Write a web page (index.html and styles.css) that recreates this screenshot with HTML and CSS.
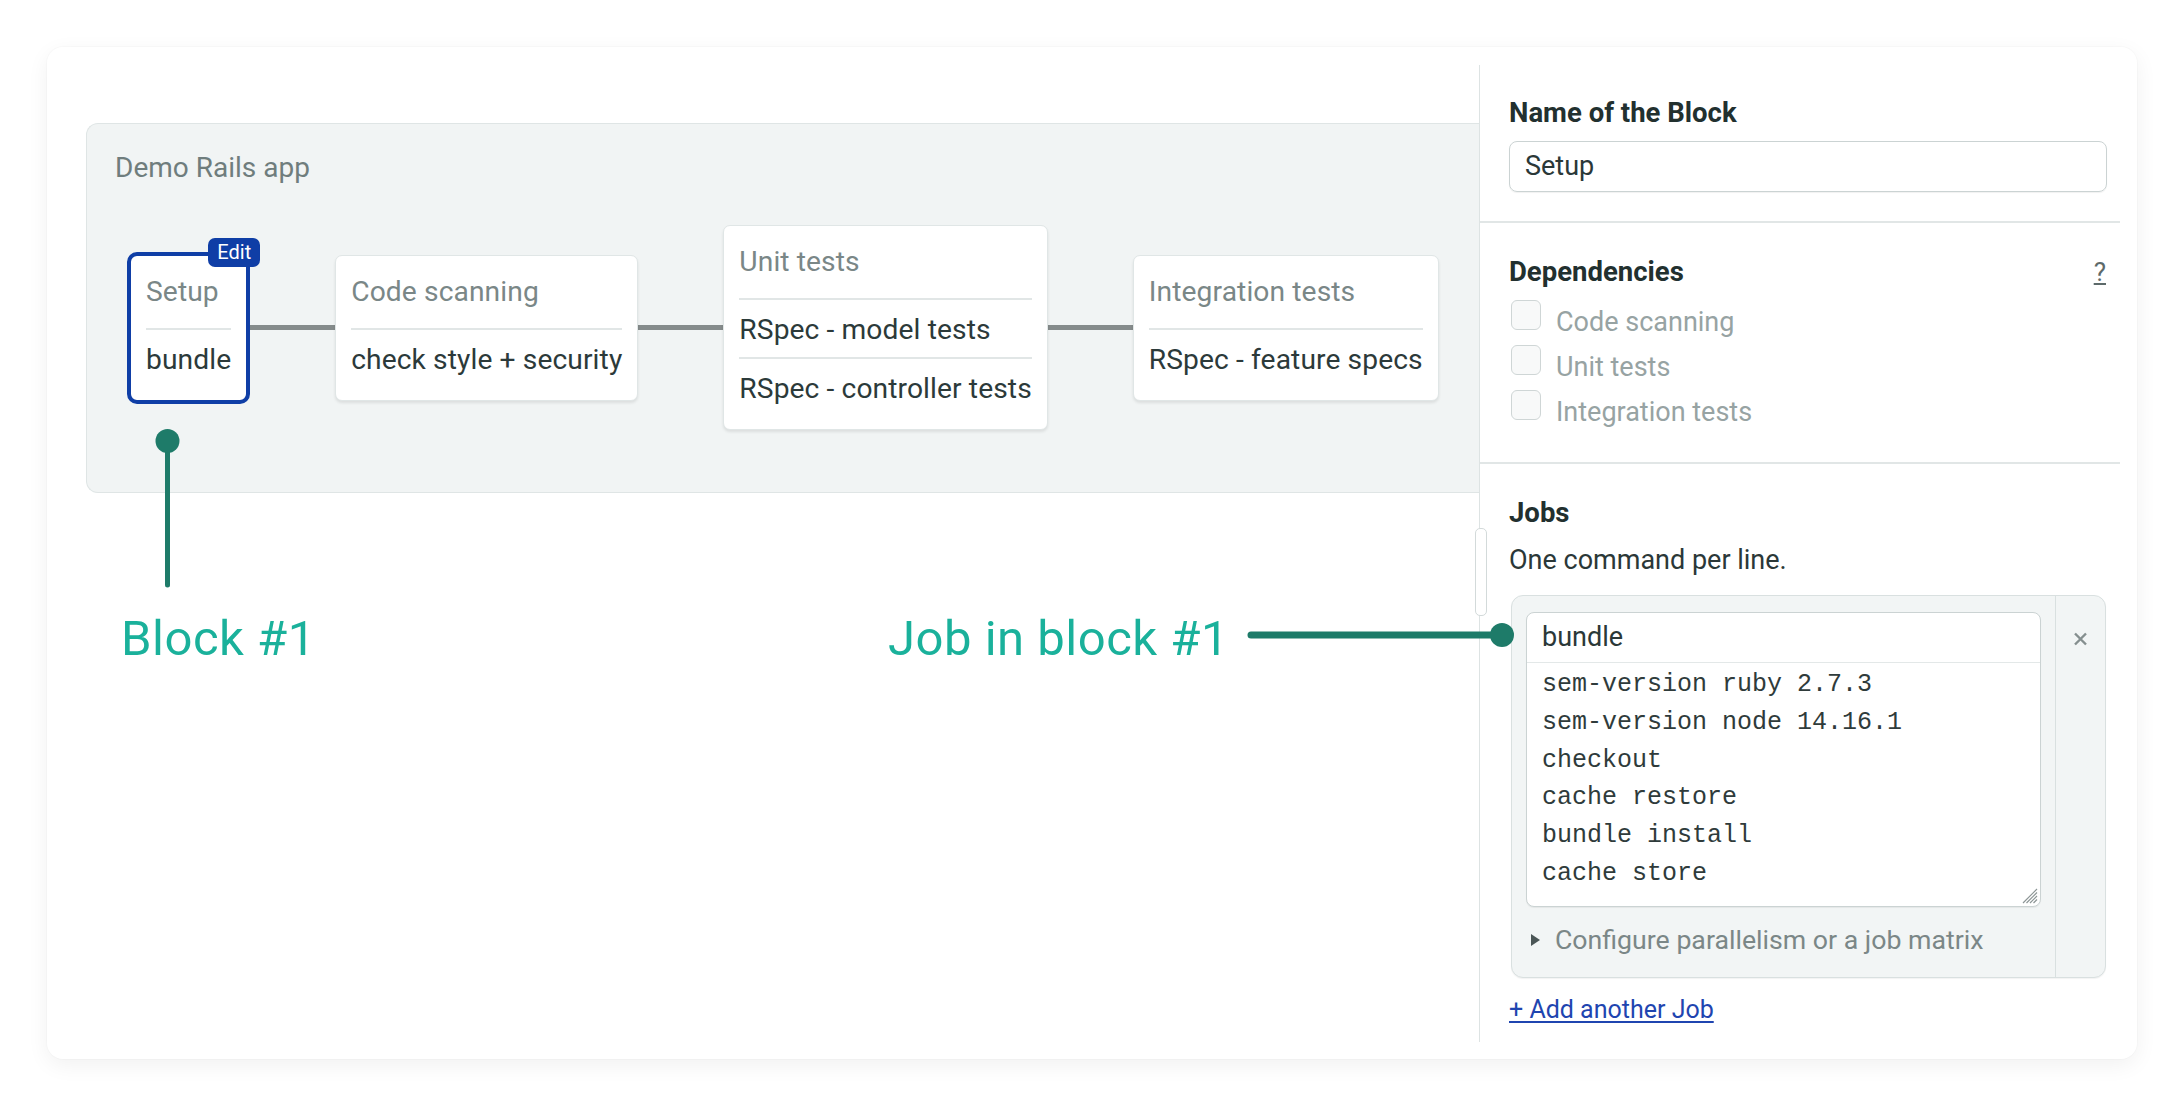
FILE: index.html
```html
<!DOCTYPE html>
<html>
<head>
<meta charset="utf-8">
<link rel="stylesheet" href="styles.css">
</head>
<body>
<div class="card">
  <div class="canvas">
    <div class="pipeline">
      <div class="pipeline-title">Demo Rails app</div>
      <div class="blocks">
        <div class="block selected">
          <span class="badge">Edit</span>
          <div class="block-title">Setup</div>
          <div class="job">bundle</div>
        </div>
        <div class="connector"></div>
        <div class="block">
          <div class="block-title">Code scanning</div>
          <div class="job">check style + security</div>
        </div>
        <div class="connector"></div>
        <div class="block">
          <div class="block-title">Unit tests</div>
          <div class="job">RSpec - model tests</div>
          <div class="job">RSpec - controller tests</div>
        </div>
        <div class="connector"></div>
        <div class="block">
          <div class="block-title">Integration tests</div>
          <div class="job">RSpec - feature specs</div>
        </div>
      </div>
    </div>
  </div>

  <div class="panel">
    <section class="sec sec-name">
      <div class="label">Name of the Block</div>
      <div class="input">Setup</div>
    </section>
    <section class="sec sec-deps">
      <div class="label-row">
        <div class="label">Dependencies</div>
        <span class="help">?</span>
      </div>
      <div class="check"><span class="box"></span><span class="check-label">Code scanning</span></div>
      <div class="check"><span class="box"></span><span class="check-label">Unit tests</span></div>
      <div class="check"><span class="box"></span><span class="check-label">Integration tests</span></div>
    </section>
    <section class="sec sec-jobs">
      <div class="label">Jobs</div>
      <div class="hint">One command per line.</div>
      <div class="jobbox">
        <div class="job-main">
          <div class="editor">
            <div class="job-name">bundle</div>
            <div class="cmds">
              <div>sem-version ruby 2.7.3</div>
              <div>sem-version node 14.16.1</div>
              <div>checkout</div>
              <div>cache restore</div>
              <div>bundle install</div>
              <div>cache store</div>
              <svg class="grip" width="16" height="16" viewBox="0 0 16 16"><path d="M15 1 L1 15 M15 4.5 L4.5 15 M15 8 L8 15 M15 11.5 L11.5 15" stroke="#8d9696" stroke-width="1.2" fill="none"/></svg>
            </div>
          </div>
          <div class="config"><span class="tri"></span>Configure parallelism or a job matrix</div>
        </div>
        <div class="job-side">
          <svg width="15" height="14" viewBox="0 0 15 14"><path d="M2 1.5 L13 12.5 M13 1.5 L2 12.5" stroke="#858f8f" stroke-width="2.4" fill="none"/></svg>
        </div>
      </div>
      <a class="add" href="#">+ Add another Job</a>
    </section>
  </div>

  <div class="thumb"></div>
  <svg class="annot" width="2090" height="1012" viewBox="0 0 2090 1012">
    <line x1="120.5" y1="394" x2="120.5" y2="538" stroke="#1e7b69" stroke-width="5" stroke-linecap="round"/>
    <circle cx="120.5" cy="394" r="12" fill="#1e7b69"/>
    <line x1="1204" y1="588" x2="1455" y2="588" stroke="#1e7b69" stroke-width="7" stroke-linecap="round"/>
    <circle cx="1455" cy="588" r="12" fill="#1e7b69"/>
  </svg>
  <div class="note note-block">Block #1</div>
  <div class="note note-job">Job in block #1</div>
</div>
</body>
</html>
```

FILE: styles.css
```css
* { box-sizing: border-box; }
html, body { margin: 0; padding: 0; background: #ffffff; }
body {
  font-family: Roboto, "Liberation Sans", Arial, sans-serif;
  color: #2b3838;
  width: 2184px;
  height: 1108px;
  overflow: hidden;
}

.card {
  position: relative;
  margin: 47px 0 0 47px;
  width: 2090px;
  height: 1012px;
  background: #ffffff;
  border-radius: 16px;
  box-shadow: 0 6px 22px rgba(0, 0, 0, 0.06), 0 0 0 1px rgba(0, 0, 0, 0.015);
  display: flex;
  padding: 18px 17px 17px 0;
}

.canvas {
  flex: 1;
  padding: 58px 0 0 39px;
}

.pipeline {
  background: #f1f4f4;
  border: 1px solid #dfe5e5;
  border-right: none;
  border-radius: 12px 0 0 12px;
  padding: 26px 0 0 28px;
  height: 370px;
}

.pipeline-title {
  font-size: 28px;
  line-height: 36px;
  color: #6f7d7d;
}

.blocks {
  display: flex;
  align-items: center;
  height: 205px;
  margin: 39px 0 0 12px;
}

.connector {
  width: 85px;
  height: 5px;
  background: #858b8b;
  flex: none;
}

.block {
  position: relative;
  flex: none;
  background: #ffffff;
  border: 1px solid #e0e6e6;
  border-radius: 7px;
  box-shadow: 0 2px 3px rgba(0, 0, 0, 0.09);
  padding: 0 15px 13px;
  font-size: 28.2px;
  letter-spacing: 0.1px;
}

.block.selected {
  border: 4px solid #0f3ea6;
  border-radius: 10px;
  box-shadow: none;
}

.badge {
  position: absolute;
  top: -18px;
  right: -14px;
  height: 29px;
  padding: 0 9px;
  background: #0f3ea6;
  color: #ffffff;
  border-radius: 7px;
  font-size: 20px;
  line-height: 29px;
  letter-spacing: 0;
}

.block-title {
  padding: 17px 0 17px;
  line-height: 38px;
  color: #7a8787;
  white-space: nowrap;
}

.job {
  border-top: 2px solid #e1e6e6;
  padding: 11px 0 9px;
  line-height: 37px;
  color: #2c3a3a;
  white-space: nowrap;
}

/* Right panel */
.panel {
  width: 641px;
  flex: none;
  border-left: 1px solid #dde3e3;
  display: flex;
  flex-direction: column;
}

.sec {
  padding: 0 13px 0 29px;
  border-bottom: 2px solid #e1e6e6;
}

.sec-jobs { border-bottom: none; }

.label {
  font-size: 27.5px;
  line-height: 36px;
  font-weight: 700;
  color: #22302f;
}

.sec-name { padding-top: 30px; padding-bottom: 29px; }

.input {
  margin-top: 10px;
  height: 51px;
  border: 1px solid #cbd3d3;
  border-radius: 8px;
  box-shadow: 0 1px 1px rgba(0, 0, 0, 0.06);
  padding: 0 15px;
  font-size: 27px;
  line-height: 49px;
  color: #2b3838;
}

.sec-deps { padding-top: 31px; padding-bottom: 27px; }

.label-row {
  display: flex;
  justify-content: space-between;
  align-items: center;
  margin-bottom: 10px;
}

.help {
  font-size: 26px;
  line-height: 36px;
  color: #5d6a6a;
  text-decoration: underline;
  margin-right: 1px;
}

.check {
  display: flex;
  align-items: flex-start;
  height: 45px;
  padding-left: 2px;
}

.box {
  width: 30px;
  height: 30px;
  border: 1px solid #cfd6d6;
  border-radius: 6px;
  background: #f8f9f9;
  flex: none;
}

.check-label {
  margin-left: 15px;
  font-size: 27px;
  line-height: 45px;
  color: #97a3a3;
}

.sec-jobs { padding-top: 31px; padding-bottom: 14px; }

.hint {
  margin-top: 11px;
  font-size: 27px;
  line-height: 36px;
  color: #2b3838;
}

.jobbox {
  margin-top: 17px;
  margin-left: 2px;
  width: 595px;
  height: 383px;
  display: flex;
  background: #f2f5f5;
  border: 1px solid #d9e0e0;
  border-radius: 12px;
  box-shadow: 0 1px 1px rgba(0, 0, 0, 0.05);
}

.job-main {
  width: 543px;
  padding: 16px 14px 0 14px;
}

.editor {
  height: 295px;
  background: #ffffff;
  border: 1px solid #cbd3d3;
  border-radius: 8px;
  box-shadow: 0 1px 1px rgba(0, 0, 0, 0.06);
  display: flex;
  flex-direction: column;
}

.job-name {
  height: 50px;
  border-bottom: 1px solid #e3e8e8;
  padding: 0 15px;
  font-size: 27px;
  line-height: 49px;
  color: #2b3838;
}

.cmds {
  position: relative;
  flex: 1;
  padding: 3px 15px 0;
  font-family: "Liberation Mono", "Courier New", monospace;
  font-size: 25px;
  line-height: 37.8px;
  color: #2f3b3b;
}

.grip {
  position: absolute;
  right: 2px;
  bottom: 2px;
}

.config {
  margin-top: 15px;
  display: flex;
  align-items: center;
  font-size: 26.7px;
  line-height: 36px;
  color: #7b8787;
}

.tri {
  width: 0;
  height: 0;
  border-top: 6px solid transparent;
  border-bottom: 6px solid transparent;
  border-left: 9px solid #4b5656;
  margin: 0 15px 0 5px;
}

.job-side {
  flex: 1;
  border-left: 1px solid #d9e0e0;
  display: flex;
  justify-content: center;
  padding-top: 36px;
}

.job-side svg { display: block; }

.add {
  display: inline-block;
  margin-top: 14px;
  font-size: 25px;
  line-height: 36px;
  color: #1f45b0;
  text-decoration: underline;
  text-decoration-thickness: 2px;
  text-underline-offset: 3px;
  align-self: flex-start;
}

/* overlays */
.thumb {
  position: absolute;
  left: 1428px;
  top: 481px;
  width: 12px;
  height: 88px;
  background: #ffffff;
  border: 1.5px solid #d3dada;
  border-radius: 5px;
}

.annot {
  position: absolute;
  left: 0;
  top: 0;
  pointer-events: none;
}

.note {
  position: absolute;
  top: 567px;
  font-size: 49px;
  line-height: 49px;
  letter-spacing: 0.5px;
  color: #1ab19b;
  white-space: nowrap;
}

.note-block { left: 74px; }
.note-job { left: 841px; }
```
